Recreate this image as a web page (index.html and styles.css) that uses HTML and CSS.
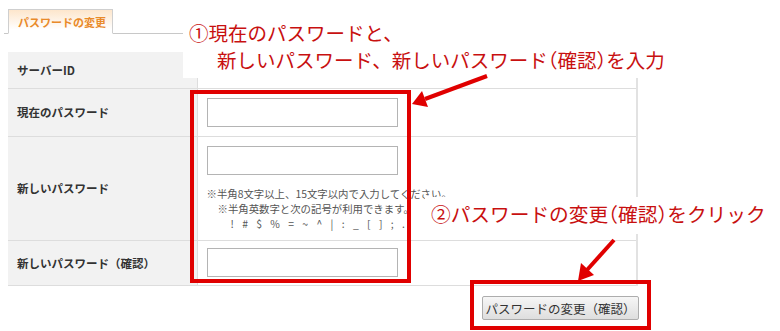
FILE: index.html
```html
<!DOCTYPE html>
<html lang="ja">
<head>
  <meta charset="UTF-8" />
  <title>パスワードの変更</title>
  <link rel="stylesheet" href="styles.css">
</head>
<body>
  <div class="page">
    <div class="tabs">
      <div class="tab">パスワードの変更</div>
    </div>

    <table class="form-table">
      <tr class="row-id">
        <th>サーバーID</th>
        <td></td>
      </tr>
      <tr class="row-current">
        <th>現在のパスワード</th>
        <td><input type="password" class="pw-input"></td>
      </tr>
      <tr class="row-new">
        <th>新しいパスワード</th>
        <td>
          <input type="password" class="pw-input">
          <p class="note">※半角8文字以上、15文字以内で入力してください。</p>
          <p class="note note-sub">※半角英数字と次の記号が利用できます。</p>
          <p class="note note-symbols">! # $ % = ~ ^ | : _ [ ] ; .</p>
        </td>
      </tr>
      <tr class="row-confirm">
        <th>新しいパスワード（確認）</th>
        <td><input type="password" class="pw-input"></td>
      </tr>
    </table>

    <div class="actions">
      <button class="submit-btn">パスワードの変更（確認）</button>
    </div>

    <!-- 説明用の注釈 -->
    <div class="callout callout-1">
      <p>①現在のパスワードと、</p>
      <p class="indent">新しいパスワード、新しいパスワード<span class="p">（</span>確認<span class="p">）</span>を入力</p>
    </div>
    <div class="callout callout-2">
      <p>②パスワードの変更<span class="p">（</span>確認<span class="p">）</span>をクリック</p>
    </div>

    <div class="red-frame frame-inputs"></div>
    <div class="red-frame frame-button"></div>

    <svg class="arrows" width="780" height="331" viewBox="0 0 780 331">
      <line x1="487" y1="76" x2="425" y2="99" stroke="#e00000" stroke-width="4"/>
      <polygon points="412,104 428,107 422,91" fill="#e00000"/>
      <line x1="614" y1="240" x2="587" y2="270" stroke="#e00000" stroke-width="4"/>
      <polygon points="578,281 594,275 581,263" fill="#e00000"/>
    </svg>
  </div>
</body>
</html>
```

FILE: styles.css
```css
* {
  box-sizing: border-box;
  margin: 0;
  padding: 0;
}

body {
  font-family: "Noto Sans CJK JP", "Noto Sans", sans-serif;
  background: #fff;
  color: #333;
}

.page {
  position: relative;
  width: 780px;
  height: 331px;
  overflow: hidden;
  padding-top: 8px;
}

.tabs {
  margin-left: 4px;
  width: 300px;
  border-bottom: 1px solid #c8c8c8;
  padding-left: 4px;
}

.tab {
  display: inline-block;
  width: 105px;
  height: 25px;
  margin-bottom: -1px;
  border: 1px solid #cfcfcf;
  border-bottom: 1px solid #fff;
  background: linear-gradient(#fde6cc, #fff 85%);
  color: #e98a2a;
  font-size: 11px;
  font-weight: bold;
  line-height: 24px;
  padding-left: 9px;
}

.form-table {
  margin: 18px 0 0 8px;
  width: 630px;
  border-collapse: collapse;
}

.form-table th,
.form-table td {
  border-bottom: 1px solid #ddd;
  vertical-align: middle;
}

.form-table th {
  width: 189px;
  background: #f2f2f2;
  border-right: 1px solid #ddd;
  text-align: left;
  padding-left: 9px;
  font-size: 11.5px;
  font-weight: bold;
  color: #333;
}

.form-table td {
  border-right: 2px solid #e2e2e2;
  padding-left: 9px;
}

.row-id th, .row-id td { height: 36px; }
.row-current th, .row-current td { height: 48px; }
.row-new th, .row-new td { height: 104px; }
.row-confirm th, .row-confirm td { height: 45px; }

.row-new td {
  vertical-align: top;
  padding-top: 9px;
}

.pw-input {
  display: block;
  width: 191px;
  height: 29px;
  border: 1px solid #b4b4b4;
  background: #fff;
}

.note {
  font-size: 10.4px;
  color: #555;
  line-height: 15px;
}

.row-new .pw-input {
  margin-bottom: 11px;
}

.note-sub {
  padding-left: 11px;
}

.note-symbols {
  padding-left: 24px;
  word-spacing: 6px;
}

.actions {
  width: 639px;
  margin-top: 9px;
  text-align: right;
}

.submit-btn {
  width: 157px;
  height: 24px;
  border: 1px solid #adadad;
  border-radius: 2px;
  background: linear-gradient(#f6f6f6, #dedede);
  font-family: "Noto Sans CJK JP", sans-serif;
  font-size: 12.5px;
  color: #333;
}

.callout {
  position: absolute;
  background: #fff;
  color: #c81010;
  line-height: 27px;
  white-space: nowrap;
}

.callout .p {
  font-feature-settings: "halt";
}

.callout-1 {
  left: 183px;
  top: 18px;
  width: 462px;
  height: 60px;
  padding: 1px 0 0 6px;
  font-size: 19.5px;
}

.callout-1 .indent {
  padding-left: 28px;
}

.callout-2 {
  left: 425px;
  top: 197px;
  width: 355px;
  height: 37px;
  padding: 3px 0 0 6px;
  font-size: 19.7px;
}

.red-frame {
  position: absolute;
  border: 4px solid #e00000;
}

.frame-inputs {
  left: 190px;
  top: 90px;
  width: 221px;
  height: 193px;
}

.frame-button {
  left: 470px;
  top: 280px;
  width: 181px;
  height: 50px;
}

.arrows {
  position: absolute;
  left: 0;
  top: 0;
}
```
